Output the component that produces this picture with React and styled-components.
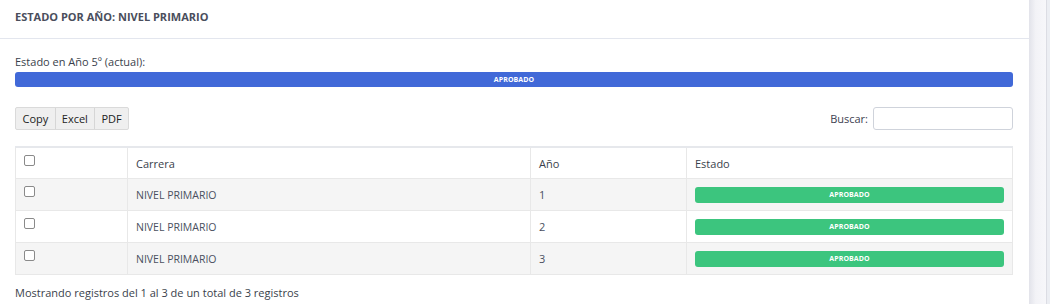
import React from 'react';
import styled, { createGlobalStyle } from 'styled-components';

const GlobalStyle = createGlobalStyle`
  body {
    margin: 0;
    background: #fff;
    font-family: "Open Sans", "Liberation Sans", sans-serif;
    color: #3d4250;
  }
`;

const Page = styled.div`
  display: flex;
  width: 1050px;
  height: 304px;
  overflow: hidden;
`;

const Card = styled.div`
  width: 1029px;
  flex-shrink: 0;
  background: #fff;
`;

const Scroller = styled.div`
  width: 17px;
  flex-shrink: 0;
  background: linear-gradient(to right, #e2e3ea, #f3f3f7 40%, #f7f7fa);
  border-right: 1px solid #dcdde4;
`;

const Rest = styled.div`
  flex: 1;
  background: #eceef3;
`;

const CardHeader = styled.div`
  height: 29px;
  padding: 9px 15px 0;
  border-bottom: 1px solid #e3e6ee;
  h3 {
    margin: 0;
    font-size: 11px;
    line-height: 15px;
    font-weight: 700;
    color: #4a4e5c;
  }
`;

const CardBody = styled.div`
  padding: 16px 16px 0 15px;
`;

const Label = styled.div`
  font-size: 11px;
  color: #3a3f4b;
  line-height: 14px;
  margin-bottom: 3px;
`;

const Badge = styled.div`
  background: ${p => p.$color};
  color: #fff;
  font-size: 7px;
  font-weight: 700;
  text-align: center;
  border-radius: 3px;
  height: ${p => p.$h}px;
  line-height: ${p => p.$h}px;
  letter-spacing: 0.1px;
`;

const Toolbar = styled.div`
  display: flex;
  justify-content: space-between;
  align-items: center;
  margin-top: 20px;
`;

const ButtonGroup = styled.div`
  display: flex;
  border: 1px solid #dadada;
  border-radius: 2px;
  background: #efefef;
`;

const Btn = styled.button`
  font-family: inherit;
  font-size: 11px;
  color: #222;
  background: transparent;
  border: none;
  border-left: ${p => (p.$first ? 'none' : '1px solid #d6d6d6')};
  height: 21px;
  padding: 0 ${p => p.$px}px;
  cursor: pointer;
`;

const Search = styled.label`
  display: flex;
  align-items: center;
  gap: 5px;
  font-size: 11px;
  color: #3d4250;
  input {
    width: 136px;
    height: 19px;
    border: 1px solid #cfd3db;
    border-radius: 3px;
    padding: 1px;
    outline: none;
  }
`;

const Table = styled.table`
  width: 100%;
  margin-top: 16px;
  border-collapse: collapse;
  border-top: 2px solid #e6e8ec;
  font-size: 11px;
`;

const Th = styled.th`
  text-align: left;
  font-weight: 400;
  color: #3a3f4b;
  height: 30px;
  padding: 0 8px;
  border: 1px solid #e8e8e8;
  width: ${p => p.$w || 'auto'};
`;

const Row = styled.tr`
  background: ${p => (p.$striped ? '#f5f5f5' : '#fff')};
`;

const Td = styled.td`
  height: 31px;
  padding: 0 8px;
  border: 1px solid #e8e8e8;
  color: #4a5060;
  font-size: ${p => (p.$small ? '10.5px' : '11px')};
`;

const Check = styled.span`
  display: inline-block;
  width: 9px;
  height: 9px;
  border: 1px solid #8a8a8a;
  border-radius: 2px;
  background: #fff;
  vertical-align: middle;
  position: relative;
  top: ${p => (p.$top ? '-4px' : '-5px')};
`;

const Footer = styled.div`
  font-size: 11px;
  color: #3a3f4b;
  margin-top: 10px;
`;

const rows = [1, 2, 3];

export default function App() {
  return (
    <Page>
      <GlobalStyle />
      <Card>
        <CardHeader>
          <h3>ESTADO POR AÑO: NIVEL PRIMARIO</h3>
        </CardHeader>
        <CardBody>
          <Label>Estado en Año 5º (actual):</Label>
          <Badge $color="#4169d8" $h={15}>APROBADO</Badge>
          <Toolbar>
            <ButtonGroup>
              <Btn $first $px={6.5}>Copy</Btn>
              <Btn $px={6}>Excel</Btn>
              <Btn $px={6.5}>PDF</Btn>
            </ButtonGroup>
            <Search>
              Buscar:
              <input type="text" />
            </Search>
          </Toolbar>
          <Table>
            <thead>
              <tr>
                <Th $w="95px"><Check $top /></Th>
                <Th $w="386px">Carrera</Th>
                <Th $w="139px">Año</Th>
                <Th>Estado</Th>
              </tr>
            </thead>
            <tbody>
              {rows.map((n, i) => (
                <Row key={n} $striped={i % 2 === 0}>
                  <Td><Check /></Td>
                  <Td $small>NIVEL PRIMARIO</Td>
                  <Td>{n}</Td>
                  <Td><Badge $color="#3cc57e" $h={16}>APROBADO</Badge></Td>
                </Row>
              ))}
            </tbody>
          </Table>
          <Footer>Mostrando registros del 1 al 3 de un total de 3 registros</Footer>
        </CardBody>
      </Card>
      <Scroller />
      <Rest />
    </Page>
  );
}
